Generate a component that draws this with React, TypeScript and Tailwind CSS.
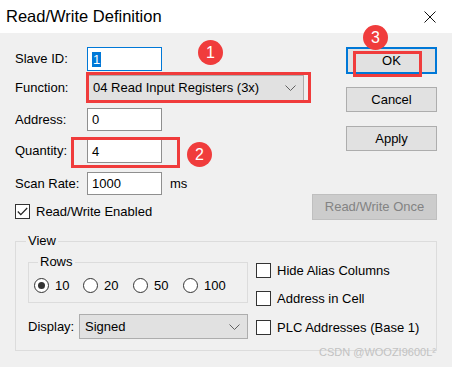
import React from "react";

const red = "border-[#f03c3c]";

function TextBox({
  value,
  focused,
  className = "",
}: {
  value: string;
  focused?: boolean;
  className?: string;
}) {
  return (
    <div
      className={`flex items-center w-[75px] bg-white border pl-[4px] ${
        focused ? "border-[#0078d7]" : "border-[#8f8f8f]"
      } ${className}`}
    >
      {focused ? (
        <span className="bg-[#0078d7] text-white px-[1px] leading-[15px]">{value}</span>
      ) : (
        <span className="leading-[15px]">{value}</span>
      )}
    </div>
  );
}

function Chevron() {
  return (
    <svg width="11" height="6" viewBox="0 0 11 6" className="shrink-0">
      <polyline points="0.5,0.5 5.5,5.5 10.5,0.5" fill="none" stroke="#606060" strokeWidth="1" />
    </svg>
  );
}

function Combo({ value, className = "" }: { value: string; className?: string }) {
  return (
    <div
      className={`flex items-center justify-between bg-[#e1e1e1] border border-[#adadad] pl-[5px] pr-[7px] ${className}`}
    >
      <span>{value}</span>
      <Chevron />
    </div>
  );
}

function Button({
  label,
  isDefault,
  disabled,
  className = "",
}: {
  label: string;
  isDefault?: boolean;
  disabled?: boolean;
  className?: string;
}) {
  let tone = "bg-[#e1e1e1] border border-[#adadad] text-black";
  if (isDefault) tone = "bg-[#e1e1e1] border-2 border-[#0078d7] text-black";
  if (disabled) tone = "bg-[#cccccc] border border-[#bfbfbf] text-[#838383]";
  return (
    <div className={`flex items-center justify-center ${tone} ${className}`}>{label}</div>
  );
}

function CheckBox({ checked }: { checked?: boolean }) {
  return (
    <div className="w-[15px] h-[15px] border border-[#333333] bg-white flex items-center justify-center shrink-0">
      {checked && (
        <svg width="11" height="9" viewBox="0 0 11 9">
          <polyline points="0.8,4.5 3.8,7.6 10.2,1" fill="none" stroke="#222" strokeWidth="1.2" />
        </svg>
      )}
    </div>
  );
}

function Radio({ checked }: { checked?: boolean }) {
  return (
    <div className="w-[15px] h-[15px] rounded-full border border-[#333333] bg-white flex items-center justify-center shrink-0">
      {checked && <div className="w-[7px] h-[7px] rounded-full bg-[#333333]" />}
    </div>
  );
}

function Badge({ n, className }: { n: number; className: string }) {
  return (
    <div
      className={`absolute w-[25px] h-[25px] rounded-full bg-[#f03c3c] text-white text-[16px] flex items-center justify-center ${className}`}
    >
      {n}
    </div>
  );
}

export default function App() {
  return (
    <div className="relative w-[452px] h-[367px] overflow-hidden bg-[#f0f0f0] font-['Liberation_Sans',Arial,sans-serif] text-[13px] text-black">
      {/* title bar */}
      <div className="h-[33px] bg-white flex items-center justify-between pl-[6px] pr-[16px]">
        <span className="text-[16.5px]">Read/Write Definition</span>
        <svg width="12" height="12" viewBox="0 0 12 12">
          <path d="M0.5 0.5 L11.5 11.5 M11.5 0.5 L0.5 11.5" stroke="#111" strokeWidth="1" />
        </svg>
      </div>

      <div className="pt-[14px]">
        <div className="flex px-[15px]">
          <div className="flex flex-col">
            <div className="flex items-center h-[24px]">
              <span className="w-[72px]">Slave ID:</span>
              <TextBox value="1" focused className="h-[24px]" />
            </div>
            <div className="flex items-center h-[26px] mt-[4px]">
              <span className="w-[72px]">Function:</span>
              <Combo value="04 Read Input Registers (3x)" className="w-[217px] h-[26px]" />
            </div>
            <div className="flex items-center h-[23px] mt-[7px]">
              <span className="w-[72px]">Address:</span>
              <TextBox value="0" className="h-[23px]" />
            </div>
            <div className="flex items-center h-[24px] mt-[8px]">
              <span className="w-[72px]">Quantity:</span>
              <TextBox value="4" className="h-[24px]" />
            </div>
            <div className="flex items-center h-[23px] mt-[9px]">
              <span className="w-[72px]">Scan Rate:</span>
              <TextBox value="1000" className="h-[23px]" />
              <span className="ml-[8px]">ms</span>
            </div>
            <div className="flex items-center h-[15px] mt-[9px]">
              <CheckBox checked />
              <span className="ml-[6px]">Read/Write Enabled</span>
            </div>
          </div>

          <div className="ml-auto flex flex-col items-end">
            <Button label="OK" isDefault className="w-[91px] h-[27px]" />
            <Button label="Cancel" className="w-[91px] h-[25px] mt-[13px]" />
            <Button label="Apply" className="w-[91px] h-[25px] mt-[14px]" />
            <Button label="Read/Write Once" disabled className="w-[125px] h-[26px] mt-[43px]" />
          </div>
        </div>

        {/* View group */}
        <div className="relative mx-[15px] mt-[21px] h-[110px] border border-[#dcdcdc] pl-[12px] pt-[20px] flex">
          <span className="absolute -top-[9px] left-[10px] px-[2px] bg-[#f0f0f0] leading-[16px]">View</span>
          <div className="flex flex-col">
            <div className="relative w-[220px] h-[41px] border border-[#dcdcdc] pl-[5px] pt-[13px]">
              <span className="absolute -top-[9px] left-[9px] px-[2px] bg-[#f0f0f0] leading-[16px]">Rows</span>
              <div className="flex items-center">
                <div className="flex items-center w-[49px]">
                  <Radio checked />
                  <span className="ml-[6px]">10</span>
                </div>
                <div className="flex items-center w-[50px]">
                  <Radio />
                  <span className="ml-[6px]">20</span>
                </div>
                <div className="flex items-center w-[50px]">
                  <Radio />
                  <span className="ml-[6px]">50</span>
                </div>
                <div className="flex items-center">
                  <Radio />
                  <span className="ml-[6px]">100</span>
                </div>
              </div>
            </div>
            <div className="flex items-center mt-[11px]">
              <span className="w-[51px]">Display:</span>
              <Combo value="Signed" className="w-[169px] h-[25px]" />
            </div>
          </div>
          <div className="flex flex-col ml-[8px] pt-[1px] gap-[13px]">
            <div className="flex items-center h-[15px]">
              <CheckBox />
              <span className="ml-[6px]">Hide Alias Columns</span>
            </div>
            <div className="flex items-center h-[15px]">
              <CheckBox />
              <span className="ml-[6px]">Address in Cell</span>
            </div>
            <div className="flex items-center h-[15px] mt-[1px]">
              <CheckBox />
              <span className="ml-[6px]">PLC Addresses (Base 1)</span>
            </div>
          </div>
        </div>
      </div>

      {/* annotations */}
      <div className={`absolute left-[86px] top-[72px] w-[225px] h-[31px] border-[3px] ${red}`} />
      <div className={`absolute left-[71px] top-[137px] w-[109px] h-[31px] border-[3px] ${red}`} />
      <div className={`absolute left-[353px] top-[51px] w-[69px] h-[26px] border-[3px] ${red}`} />
      <Badge n={1} className="left-[198px] top-[40px]" />
      <Badge n={2} className="left-[187px] top-[142px]" />
      <Badge n={3} className="left-[363px] top-[25px]" />

      <span className="absolute left-[319px] top-[345px] text-[11px] text-[#c2c2c2] leading-[14px]">
        CSDN @WOOZI9600L²
      </span>
    </div>
  );
}
